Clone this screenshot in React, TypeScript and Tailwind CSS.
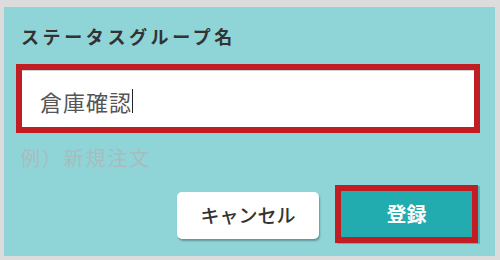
import React from 'react';

const font = { fontFamily: '"Noto Sans CJK JP", "Noto Sans", sans-serif' };

export default function App() {
  return (
    <div className="w-[500px] h-[260px] bg-[#dcdcdc] pl-[4px] pt-[7px]" style={font}>
      <div className="w-[491px] h-[249px] bg-[#8fd5d8] flex flex-col">
        {/* title */}
        <div className="pt-[16px] pl-[17px] h-[43px] text-[18px] leading-[27px] font-bold tracking-[3.6px] text-[#333333]">
          ステータスグループ名
        </div>

        {/* input */}
        <div className="mt-[14px] ml-[12px] w-[464px] h-[69px] border-[6px] border-[#c01e22]">
          <div className="h-full bg-white shadow-[inset_0_1px_0_#c9d3d4] flex items-center pl-[18px] pt-[4px]">
            <span className="text-[22px] leading-[30px] tracking-[1px] text-[#555555]">倉庫確認</span>
            <span className="w-px h-[24px] bg-[#222222] -ml-[0.5px]" />
          </div>
        </div>

        {/* hint */}
        <div className="mt-[10px] pl-[16px] text-[20px] leading-[30px] tracking-[1.8px] text-[#a6bdbf]">
          例）新規注文
        </div>

        {/* buttons */}
        <div className="mt-[12px] flex items-center justify-end gap-[16px] pr-[17px]">
          <button className="w-[142px] h-[47px] mt-[2px] bg-white rounded-[5px] shadow-[1px_2px_2px_rgba(0,0,0,0.3)] text-[19px] font-medium text-[#333333]">
            キャンセル
          </button>
          <div className="w-[143px] h-[58px] border-[6px] border-[#c01e22] shadow-[2px_1px_0_rgba(20,150,155,0.5)]">
            <button className="w-full h-full bg-[#22acb0] text-[20px] font-bold text-white">
              登録
            </button>
          </div>
        </div>
      </div>
    </div>
  );
}
